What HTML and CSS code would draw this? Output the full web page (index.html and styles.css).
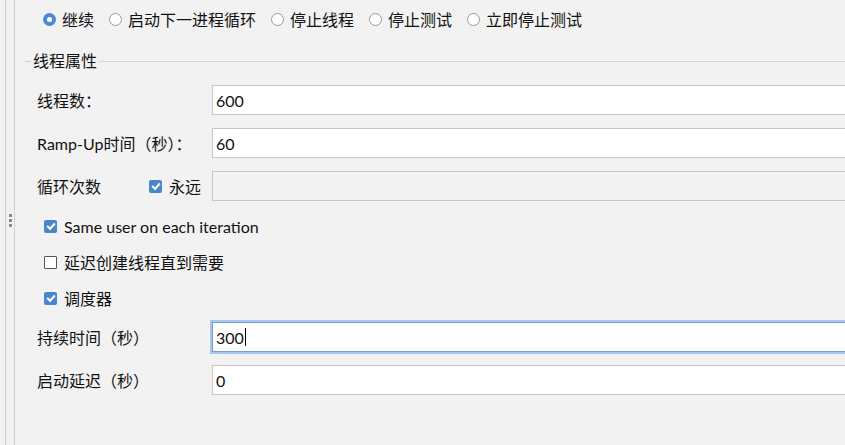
FILE: index.html
```html
<!DOCTYPE html>
<html lang="zh-CN">
<head>
<meta charset="utf-8">
<title>线程组</title>
<link rel="stylesheet" href="styles.css">
</head>
<body>
<div class="frame">
  <div class="gutter"><div class="grip"><i></i><i></i><i></i></div></div>
  <div class="panel">
    <div class="radios">
      <label class="opt"><span class="radio on"></span>继续</label>
      <label class="opt"><span class="radio"></span>启动下一进程循环</label>
      <label class="opt"><span class="radio"></span>停止线程</label>
      <label class="opt"><span class="radio"></span>停止测试</label>
      <label class="opt"><span class="radio"></span>立即停止测试</label>
    </div>
    <div class="legend"><span class="legend-text">线程属性</span></div>
    <div class="rows">
      <div class="field"><span class="label">线程数：</span><div class="input">600</div></div>
      <div class="field"><span class="label">Ramp-Up时间（秒）：</span><div class="input">60</div></div>
      <div class="field"><span class="label loop">循环次数</span><span class="check-inline"><span class="box on"></span>永远</span><div class="input disabled"></div></div>
    </div>
    <div class="checks">
      <div class="crow"><span class="box on"></span>Same user on each iteration</div>
      <div class="crow"><span class="box"></span>延迟创建线程直到需要</div>
      <div class="crow"><span class="box on"></span>调度器</div>
    </div>
    <div class="rows sched">
      <div class="field"><span class="label">持续时间（秒）</span><div class="input focus">300<span class="caret"></span></div></div>
      <div class="field"><span class="label">启动延迟（秒）</span><div class="input">0</div></div>
    </div>
  </div>
</div>
</body>
</html>
```
FILE: styles.css
```css
html, body {
  margin: 0;
  padding: 0;
}
body {
  width: 845px;
  height: 445px;
  overflow: hidden;
  background: #f2f2f2;
  font-family: Lato, "Noto Sans CJK SC", sans-serif;
  font-size: 16px;
  color: #111;
}
.frame {
  display: flex;
  height: 445px;
}
.gutter {
  width: 8px;
  margin-left: 5px;
  border-left: 1px solid #cfcfcf;
  border-right: 1px solid #cfcfcf;
  display: flex;
  align-items: center;
  justify-content: center;
}
.grip {
  display: flex;
  flex-direction: column;
  gap: 2px;
  transform: translateY(-2px);
}
.grip i {
  display: block;
  width: 3px;
  height: 3px;
  background: #8a8a8a;
}
.panel {
  flex: 1;
  display: flex;
  flex-direction: column;
  min-width: 0;
}
.radios {
  height: 38px;
  display: flex;
  align-items: center;
  padding-left: 28px;
}
.opt {
  display: flex;
  align-items: center;
  gap: 6px;
  margin-right: 15px;
  white-space: nowrap;
}
.radio {
  width: 11px;
  height: 11px;
  border: 1px solid #9a9a9a;
  border-radius: 50%;
  background: #fff;
  display: inline-flex;
  align-items: center;
  justify-content: center;
}
.radio.on {
  width: 13px;
  height: 13px;
  border: none;
  background: #4a8ad4;
}
.radio.on::after {
  content: "";
  width: 5px;
  height: 5px;
  border-radius: 50%;
  background: #fff;
}
.legend {
  margin-top: 15px;
  margin-left: 10px;
  height: 16px;
  display: flex;
  align-items: center;
}
.legend::before {
  content: "";
  width: 6px;
  height: 1px;
  background: #d2d2d2;
}
.legend::after {
  content: "";
  flex: 1;
  height: 1px;
  background: #d2d2d2;
}
.legend-text {
  padding: 0 2px 0 2px;
  line-height: 16px;
}
.rows {
  margin-top: 16px;
  display: flex;
  flex-direction: column;
  gap: 13px;
  padding-left: 22px;
  margin-right: -20px;
}
.rows.sched {
  margin-top: 6px;
}
.field {
  display: flex;
  align-items: center;
  height: 30px;
}
.label {
  width: 175px;
  flex: none;
  white-space: nowrap;
}
.label.loop {
  width: 112px;
}
.check-inline {
  width: 63px;
  display: flex;
  align-items: center;
  gap: 7px;
}
.input {
  flex: 1;
  height: 28px;
  border: 1px solid #c6c6c6;
  background: #fff;
  display: flex;
  align-items: center;
  padding-left: 3px;
}
.input.disabled {
  background: #f2f2f2;
}
.input.focus {
  border-color: #7a9cc9;
  box-shadow: 0 0 0 2px #a3c7f0;
}
.caret {
  width: 1px;
  height: 18px;
  background: #000;
  margin-left: 1px;
}
.checks {
  margin-top: 7px;
  padding-left: 29px;
  display: flex;
  flex-direction: column;
}
.crow {
  height: 36px;
  display: flex;
  align-items: center;
  gap: 7px;
  white-space: nowrap;
}
.box {
  width: 11px;
  height: 11px;
  border: 1px solid #555;
  background: #fff;
  border-radius: 1px;
  flex: none;
  position: relative;
}
.box.on {
  width: 13px;
  height: 13px;
  border: none;
  background: #4a86cc;
  border-radius: 2px;
}
.box.on::after {
  content: "";
  position: absolute;
  left: 3px;
  top: 3px;
  width: 6px;
  height: 3px;
  border-left: 2px solid #fff;
  border-bottom: 2px solid #fff;
  transform: rotate(-48deg);
  transform-origin: center;
}
```
